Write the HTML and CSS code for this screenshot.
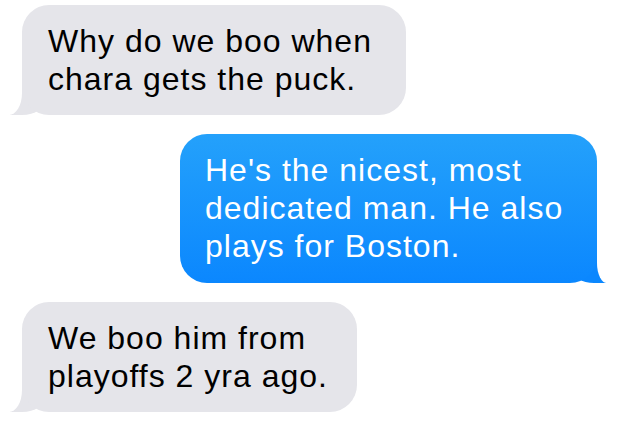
FILE: index.html
```html
<!DOCTYPE html>
<html>
<head>
<meta charset="utf-8">
<link rel="stylesheet" href="styles.css">
</head>
<body>
<div class="thread">
  <div class="msg them b1">Why do we boo when<br>chara gets the puck.</div>
  <div class="msg me b2">He's the nicest, most<br>dedicated man. He also<br>plays for Boston.</div>
  <div class="msg them b3">We boo him from<br>playoffs 2 yra ago.</div>
</div>
</body>
</html>
```
FILE: styles.css
```css
html, body {
  margin: 0;
  padding: 0;
}
.thread {
  width: 619px;
  height: 422px;
  box-sizing: border-box;
  padding-top: 5px;
  display: flex;
  flex-direction: column;
  gap: 19px;
  font-family: "Liberation Sans", Arial, sans-serif;
  font-size: 32px;
  letter-spacing: 1px;
  line-height: 38px;
}
.msg {
  position: relative;
  padding: 17px 26px;
  border-radius: 27px;
  box-sizing: border-box;
}
.them {
  align-self: flex-start;
  margin-left: 22px;
  background: #e5e5ea;
  color: #000;
}
.me {
  align-self: flex-end;
  margin-right: 22px;
  background: linear-gradient(#24a1fb, #0b87fe);
  color: #fff;
  padding-left: 25px;
  padding-bottom: 18px;
}
.msg::before,
.msg::after {
  content: "";
  position: absolute;
  bottom: 0;
  height: 30px;
  z-index: -1;
}
.them::before {
  left: -12px;
  width: 36px;
  background: #e5e5ea;
  border-bottom-right-radius: 24px 16px;
}
.them::after {
  left: -32px;
  width: 32px;
  background: #fff;
  border-bottom-right-radius: 13px 22px;
}
.me::before {
  right: -9px;
  width: 34px;
  background: #0b87fe;
  border-bottom-left-radius: 22px 14px;
}
.me::after {
  right: -32px;
  width: 32px;
  background: #fff;
  border-bottom-left-radius: 10px 20px;
}
.b1 { width: 384px; }
.b2 { width: 417px; }
.b3 { width: 335px; }
```
